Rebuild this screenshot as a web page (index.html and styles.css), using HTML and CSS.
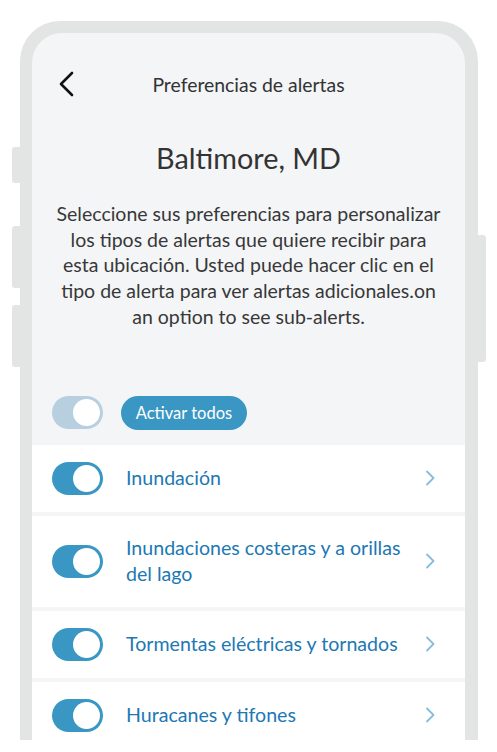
FILE: index.html
```html
<!DOCTYPE html>
<html lang="es">
<head>
<meta charset="utf-8">
<title>Preferencias de alertas</title>
<link rel="stylesheet" href="styles.css">
</head>
<body>
<div class="stage">
  <div class="phone">
    <span class="side-btn side-l1"></span>
    <span class="side-btn side-l2"></span>
    <span class="side-btn side-l3"></span>
    <span class="side-btn side-r1"></span>
    <div class="screen">
      <header class="topbar">
        <svg class="back" width="16" height="26" viewBox="0 0 16 26"><path d="M14 2 L3 13 L14 24" fill="none" stroke="#111" stroke-width="2.6" stroke-linecap="round" stroke-linejoin="round"/></svg>
        <h1 class="topbar-title">Preferencias de alertas</h1>
      </header>
      <h2 class="city">Baltimore, MD</h2>
      <p class="intro">Seleccione sus preferencias para personalizar los tipos de alertas que quiere recibir para esta ubicación. Usted puede hacer clic en el tipo de alerta para ver alertas adicionales.on an option to see sub-alerts.</p>
      <div class="all-row">
        <span class="toggle toggle-light"><span class="knob"></span></span>
        <button class="all-btn">Activar todos</button>
      </div>
      <ul class="list">
        <li class="row">
          <span class="toggle"><span class="knob"></span></span>
          <span class="label">Inundación</span>
          <svg class="chev" width="10" height="16" viewBox="0 0 10 16"><path d="M2 1.5 L8.5 8 L2 14.5" fill="none" stroke="#86bcdd" stroke-width="1.8" stroke-linecap="round" stroke-linejoin="round"/></svg>
        </li>
        <li class="row">
          <span class="toggle"><span class="knob"></span></span>
          <span class="label">Inundaciones costeras y a orillas del lago</span>
          <svg class="chev" width="10" height="16" viewBox="0 0 10 16"><path d="M2 1.5 L8.5 8 L2 14.5" fill="none" stroke="#86bcdd" stroke-width="1.8" stroke-linecap="round" stroke-linejoin="round"/></svg>
        </li>
        <li class="row">
          <span class="toggle"><span class="knob"></span></span>
          <span class="label">Tormentas eléctricas y tornados</span>
          <svg class="chev" width="10" height="16" viewBox="0 0 10 16"><path d="M2 1.5 L8.5 8 L2 14.5" fill="none" stroke="#86bcdd" stroke-width="1.8" stroke-linecap="round" stroke-linejoin="round"/></svg>
        </li>
        <li class="row">
          <span class="toggle"><span class="knob"></span></span>
          <span class="label">Huracanes y tifones</span>
          <svg class="chev" width="10" height="16" viewBox="0 0 10 16"><path d="M2 1.5 L8.5 8 L2 14.5" fill="none" stroke="#86bcdd" stroke-width="1.8" stroke-linecap="round" stroke-linejoin="round"/></svg>
        </li>
      </ul>
    </div>
  </div>
</div>
</body>
</html>
```

FILE: styles.css
```css
* { box-sizing: border-box; }
html, body { margin: 0; padding: 0; background: #ffffff; }
body {
  font-family: Lato, "Open Sans", sans-serif;
  width: 497px;
  height: 752px;
  overflow: hidden;
}
.stage {
  padding: 21px 0 0 20px;
  height: 740px;
  overflow: hidden;
}
.phone {
  position: relative;
  width: 458px;
  height: 719px;
  background: #e3e4e4;
  border-radius: 40px 40px 0 0;
  padding: 12px 13px 0 12px;
}
.side-btn {
  position: absolute;
  width: 9px;
  background: #e3e4e4;
  border-radius: 3px 0 0 3px;
}
.side-l1 { left: -8px; top: 126px; height: 36px; }
.side-l2 { left: -8px; top: 205px; height: 62px; }
.side-l3 { left: -8px; top: 284px; height: 62px; }
.side-r1 { right: -8px; top: 214px; height: 127px; border-radius: 0 3px 3px 0; }
.screen {
  height: 100%;
  background: #f4f5f7;
  border-radius: 30px 30px 0 0;
  overflow: hidden;
  padding-top: 33px;
}
.topbar {
  position: relative;
  height: 38px;
}
.back {
  position: absolute;
  left: 26px;
  top: 5px;
}
.topbar-title {
  margin: 0;
  text-align: center;
  font-size: 19.4px;
  line-height: 38px;
  font-weight: 400;
  color: #333333;
}
.city {
  margin: 37px 0 0;
  text-align: center;
  font-size: 28.8px;
  line-height: 34px;
  font-weight: 400;
  color: #333333;
}
.intro {
  margin: 26px 0 0;
  padding: 0 22px;
  text-align: center;
  font-size: 19.5px;
  line-height: 25.7px;
  color: #383838;
}
.all-row {
  margin-top: 66px;
  padding-left: 20px;
  display: flex;
  align-items: center;
  gap: 18px;
  height: 34px;
}
.toggle {
  position: relative;
  flex: none;
  width: 51px;
  height: 33px;
  border-radius: 17px;
  background: #3a97c4;
}
.toggle .knob {
  position: absolute;
  right: 3px;
  top: 3px;
  width: 27px;
  height: 27px;
  border-radius: 50%;
  background: #ffffff;
}
.toggle-light { background: #b8cfe0; }
.all-btn {
  border: none;
  height: 34px;
  width: 126px;
  border-radius: 17px;
  background: #3a97c4;
  color: #ffffff;
  font-family: inherit;
  font-size: 16.5px;
  padding: 0;
}
.list {
  list-style: none;
  margin: 15px 0 0;
  padding: 0;
  display: flex;
  flex-direction: column;
  gap: 4px;
}
.row {
  background: #ffffff;
  padding: 17px 30px 17px 20px;
  display: flex;
  align-items: center;
}
.label {
  flex: 1;
  margin-left: 23px;
  margin-right: 20px;
  padding: 2.5px 0;
  font-size: 19.6px;
  line-height: 26px;
  color: #1d78b3;
}
.chev { flex: none; }
```
